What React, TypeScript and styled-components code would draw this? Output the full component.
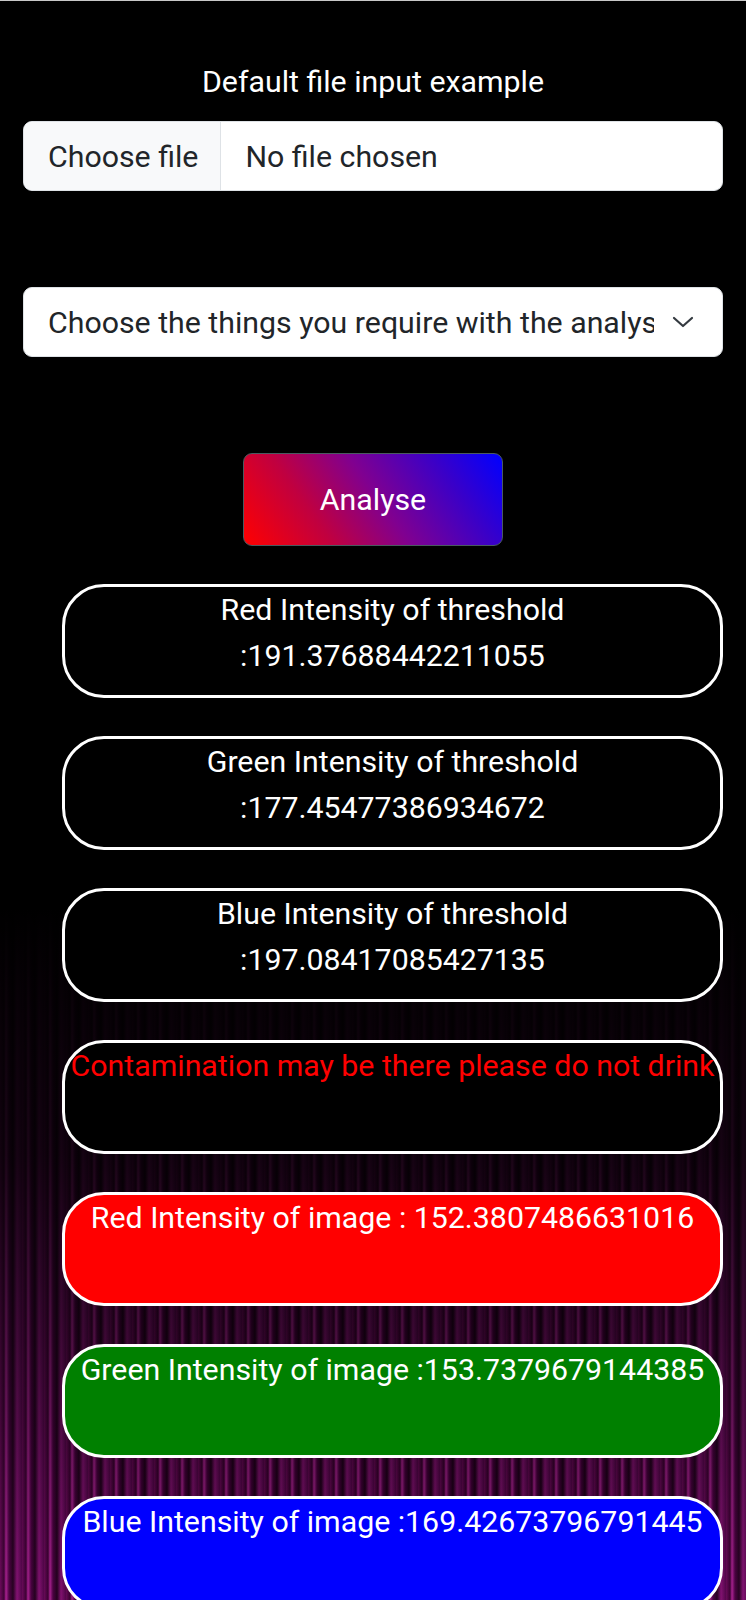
import React from "react";
import styled, { createGlobalStyle } from "styled-components";

const Global = createGlobalStyle`
  html, body {
    margin: 0;
    padding: 0;
    background: #000;
  }
  body {
    font-family: Roboto, "Liberation Sans", Arial, sans-serif;
  }
  * { box-sizing: border-box; }
`;

const Page = styled.div`
  min-height: 1600px;
  border-top: 1px solid #c8c8c8;
  padding: 58px 23px 40px 23px;
  background:
    linear-gradient(to bottom, #000 0%, #000 55%, rgba(0,0,0,0.85) 70%, rgba(0,0,0,0.45) 86%, rgba(0,0,0,0.05) 100%),
    repeating-linear-gradient(90deg,
      rgba(120, 10, 100, 0.9) 0px,
      rgba(60, 0, 50, 0.9) 4px,
      rgba(200, 40, 170, 0.9) 6px,
      rgba(80, 0, 70, 0.9) 9px,
      rgba(30, 0, 25, 0.9) 13px,
      rgba(150, 20, 130, 0.9) 17px,
      rgba(90, 5, 80, 0.9) 22px),
    linear-gradient(90deg, #c020b0 0%, #500040 18%, #400035 82%, #c020b0 100%);
  font-size: 30.3px;
`;

const Label = styled.div`
  color: #fff;
  text-align: center;
  line-height: 46px;
  margin-bottom: 16px;
`;

const FileControl = styled.div`
  display: flex;
  height: 70px;
  background: #fff;
  border: 1px solid #dee2e6;
  border-radius: 9px;
  overflow: hidden;
  color: #212529;
`;

const FileButton = styled.div`
  display: flex;
  align-items: center;
  padding: 0 22px 0 24px;
  background: #f8f9fa;
  border-right: 1px solid #dee2e6;
`;

const FileName = styled.div`
  display: flex;
  align-items: center;
  padding-left: 24px;
`;

const Select = styled.div`
  margin-top: 96px;
  display: flex;
  align-items: center;
  height: 70px;
  background: #fff;
  border: 1px solid #dee2e6;
  border-radius: 9px;
  color: #212529;
  padding: 0 28px 0 24px;
`;

const SelectText = styled.div`
  flex: 1;
  white-space: nowrap;
  overflow: hidden;
  text-overflow: clip;
  margin-right: 18px;
`;

const ButtonRow = styled.div`
  display: flex;
  justify-content: center;
  margin-top: 96px;
`;

const AnalyseButton = styled.button`
  width: 260px;
  height: 93px;
  border: 1px solid #4a5a60;
  border-radius: 9px;
  background: linear-gradient(55deg, #ff0000 0%, #c00040 28%, #800090 52%, #3a00c8 78%, #0000ff 100%);
  color: #fff;
  font-family: inherit;
  font-size: 30.3px;
`;

const Cards = styled.div`
  display: flex;
  flex-direction: column;
  gap: 38px;
  margin-top: 38px;
  padding-left: 39px;
`;

const Card = styled.div<{ $bg: string; $fg: string }>`
  height: 114px;
  border: 3px solid #fff;
  border-radius: 42px;
  background: ${(p) => p.$bg};
  color: ${(p) => p.$fg};
  display: flex;
  flex-direction: column;
  align-items: center;
  line-height: 46px;
  white-space: nowrap;
`;

const Chevron = () => (
  <svg width="22" height="12" viewBox="0 0 22 12" fill="none">
    <path d="M2 2 L11 10 L20 2" stroke="#343a40" strokeWidth="2.2" strokeLinecap="round" strokeLinejoin="round" />
  </svg>
);

const cards: { lines: string[]; bg: string; fg: string }[] = [
  { lines: ["Red Intensity of threshold", ":191.37688442211055"], bg: "#000", fg: "#fff" },
  { lines: ["Green Intensity of threshold", ":177.45477386934672"], bg: "#000", fg: "#fff" },
  { lines: ["Blue Intensity of threshold", ":197.08417085427135"], bg: "#000", fg: "#fff" },
  { lines: ["Contamination may be there please do not drink"], bg: "#000", fg: "#f00" },
  { lines: ["Red Intensity of image : 152.3807486631016"], bg: "#ff0000", fg: "#fff" },
  { lines: ["Green Intensity of image :153.7379679144385"], bg: "#008000", fg: "#fff" },
  { lines: ["Blue Intensity of image :169.42673796791445"], bg: "#0000ff", fg: "#fff" },
];

export default function App() {
  return (
    <>
      <Global />
      <Page>
        <Label>Default file input example</Label>
        <FileControl>
          <FileButton>Choose file</FileButton>
          <FileName>No file chosen</FileName>
        </FileControl>
        <Select>
          <SelectText>Choose the things you require with the analysis</SelectText>
          <Chevron />
        </Select>
        <ButtonRow>
          <AnalyseButton>Analyse</AnalyseButton>
        </ButtonRow>
        <Cards>
          {cards.map((c, i) => (
            <Card key={i} $bg={c.bg} $fg={c.fg}>
              {c.lines.map((l, j) => (
                <div key={j}>{l}</div>
              ))}
            </Card>
          ))}
        </Cards>
      </Page>
    </>
  );
}
